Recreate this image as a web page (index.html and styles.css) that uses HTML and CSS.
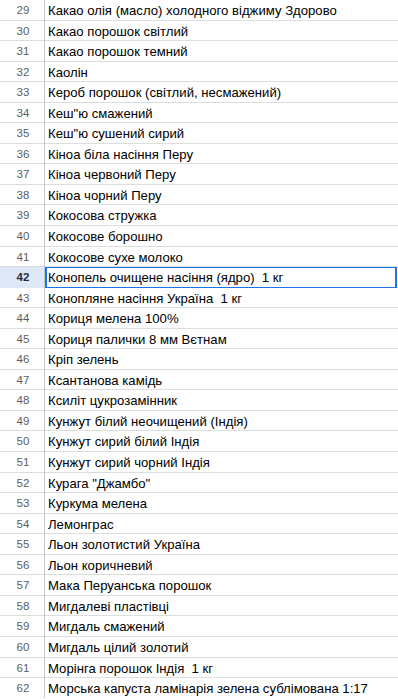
FILE: index.html
```html
<!DOCTYPE html>
<html>
<head>
<meta charset="utf-8">
<link rel="stylesheet" href="styles.css">
</head>
<body>
<div class="sheet">
  <div class="row"><div class="hd">29</div><div class="cell">Какао олія (масло) холодного віджиму Здорово</div></div>
  <div class="row"><div class="hd">30</div><div class="cell">Какао порошок світлий</div></div>
  <div class="row"><div class="hd">31</div><div class="cell">Какао порошок темний</div></div>
  <div class="row"><div class="hd">32</div><div class="cell">Каолін</div></div>
  <div class="row"><div class="hd">33</div><div class="cell">Кероб порошок (світлий, несмажений)</div></div>
  <div class="row"><div class="hd">34</div><div class="cell">Кеш"ю смажений</div></div>
  <div class="row"><div class="hd">35</div><div class="cell">Кеш"ю сушений сирий</div></div>
  <div class="row"><div class="hd">36</div><div class="cell">Кіноа біла насіння Перу</div></div>
  <div class="row"><div class="hd">37</div><div class="cell">Кіноа червоний Перу</div></div>
  <div class="row"><div class="hd">38</div><div class="cell">Кіноа чорний Перу</div></div>
  <div class="row"><div class="hd">39</div><div class="cell">Кокосова стружка</div></div>
  <div class="row"><div class="hd">40</div><div class="cell">Кокосове борошно</div></div>
  <div class="row"><div class="hd">41</div><div class="cell">Кокосове сухе молоко</div></div>
  <div class="row active"><div class="hd">42</div><div class="cell">Конопель очищене насіння (ядро)&nbsp; 1 кг</div></div>
  <div class="row"><div class="hd">43</div><div class="cell">Конопляне насіння Україна&nbsp; 1 кг</div></div>
  <div class="row"><div class="hd">44</div><div class="cell">Кориця мелена 100%</div></div>
  <div class="row"><div class="hd">45</div><div class="cell">Кориця палички 8 мм Вєтнам</div></div>
  <div class="row"><div class="hd">46</div><div class="cell">Кріп зелень</div></div>
  <div class="row"><div class="hd">47</div><div class="cell">Ксантанова камідь</div></div>
  <div class="row"><div class="hd">48</div><div class="cell">Ксиліт цукрозамінник</div></div>
  <div class="row"><div class="hd">49</div><div class="cell">Кунжут білий неочищений (Індія)</div></div>
  <div class="row"><div class="hd">50</div><div class="cell">Кунжут сирий білий Індія</div></div>
  <div class="row"><div class="hd">51</div><div class="cell">Кунжут сирий чорний Індія</div></div>
  <div class="row"><div class="hd">52</div><div class="cell">Курага "Джамбо"</div></div>
  <div class="row"><div class="hd">53</div><div class="cell">Куркума мелена</div></div>
  <div class="row"><div class="hd">54</div><div class="cell">Лемонграс</div></div>
  <div class="row"><div class="hd">55</div><div class="cell">Льон золотистий Україна</div></div>
  <div class="row"><div class="hd">56</div><div class="cell">Льон коричневий</div></div>
  <div class="row"><div class="hd">57</div><div class="cell">Мака Перуанська порошок</div></div>
  <div class="row"><div class="hd">58</div><div class="cell">Мигдалеві пластівці</div></div>
  <div class="row"><div class="hd">59</div><div class="cell">Мигдаль смажений</div></div>
  <div class="row"><div class="hd">60</div><div class="cell">Мигдаль цілий золотий</div></div>
  <div class="row"><div class="hd">61</div><div class="cell">Морінга порошок Індія&nbsp; 1 кг</div></div>
  <div class="row"><div class="hd">62</div><div class="cell">Морська капуста ламінарія зелена сублімована 1:17</div></div>
</div>
</body>
</html>
```

FILE: styles.css
```css
html, body {
  margin: 0;
  padding: 0;
  background: #ffffff;
}
.sheet {
  width: 398px;
  height: 699px;
  overflow: hidden;
  font-family: "Liberation Sans", Arial, sans-serif;
  border-top: 1px solid #dcdddd;
  box-sizing: border-box;
  margin-top: -1px;
}
.row {
  display: grid;
  grid-template-columns: 45px 1fr;
  height: 20.56px;
  box-sizing: border-box;
  border-bottom: 1px solid #dcdddd;
}
.hd {
  border-right: 1px solid #c4c7c5;
  font-size: 11.5px;
  color: #5a5e63;
  text-align center;
  text-align: center;
  line-height: 21px;
  padding-left: 2px;
}
.cell {
  font-size: 13.15px;
  color: #000000;
  padding-left: 3px;
  line-height: 21px;
  white-space: nowrap;
  overflow: hidden;
}
.row.active .hd {
  background: #dfe8f8;
  color: #1b2a48;
  font-weight: bold;
}
.row.active .cell {
  position: relative;
}
.row.active .cell::after {
  content: "";
  position: absolute;
  left: 0;
  right: 1px;
  top: -1px;
  bottom: -1px;
  border: 2px solid #1a73e8;
}
```
